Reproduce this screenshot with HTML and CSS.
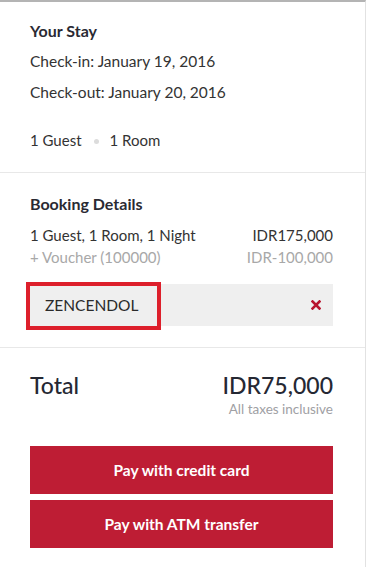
FILE: index.html
```html
<!DOCTYPE html>
<html>
<head>
<meta charset="utf-8">
<link rel="stylesheet" href="styles.css">
</head>
<body>
<div class="panel">
  <section class="stay">
    <h2 class="title">Your Stay</h2>
    <p class="line">Check-in: January 19, 2016</p>
    <p class="line">Check-out: January 20, 2016</p>
    <p class="guests">1 Guest <span class="dot"></span> 1 Room</p>
  </section>
  <section class="details">
    <h2 class="title">Booking Details</h2>
    <div class="row"><span>1 Guest, 1 Room, 1 Night</span><span>IDR175,000</span></div>
    <div class="row muted"><span>+ Voucher (100000)</span><span>IDR-100,000</span></div>
    <div class="voucher">
      <span class="code">ZENCENDOL</span>
      <svg class="remove" width="10" height="10" viewBox="0 0 10 10"><path d="M1.5 1.5L8.5 8.5M8.5 1.5L1.5 8.5" stroke="#b8142e" stroke-width="2.6" stroke-linecap="square"/></svg>
    </div>
  </section>
  <section class="summary">
    <div class="total-row"><span class="total-label">Total</span><span class="total-value">IDR75,000</span></div>
    <div class="taxes">All taxes inclusive</div>
    <button class="pay">Pay with credit card</button>
    <button class="pay">Pay with ATM transfer</button>
  </section>
</div>
</body>
</html>
```
FILE: styles.css
```css
html, body { margin: 0; padding: 0; background: #fff; }
body { font-family: Lato, "Open Sans", sans-serif; color: #2c2c34; }
.panel {
  width: 366px;
  height: 567px;
  box-sizing: border-box;
  border-top: 2px solid #b4b4b4;
  border-right: 1px solid #e2e2e2;
}
section { padding: 0 32px 0 30px; border-bottom: 1px solid #e8e8e8; }
.title { margin: 0; font-size: 16px; font-weight: 700; color: #2a2a33; line-height: 20px; }
.stay { padding-top: 19px; height: 151px; }
.line { margin: 10px 0 0; font-size: 15.5px; line-height: 20px; color: #333; }
.line + .line { margin-top: 11px; }
.guests { margin: 28px 0 0; font-size: 15px; line-height: 20px; color: #333; display: flex; align-items: center; }
.dot { width: 5px; height: 5px; border-radius: 50%; background: #dcdcdc; margin: 3px 11px 0 12px; }
.details { padding-top: 21px; height: 153px; }
.row { display: flex; justify-content: space-between; font-size: 15px; line-height: 22px; color: #333; }
.details .title { margin-bottom: 10px; }
.row.muted { color: #a8a8a8; }
.voucher {
  position: relative;
  margin-top: 16px;
  height: 42px;
  background: #efefef;
  display: flex;
  align-items: center;
  justify-content: space-between;
  padding: 0 12px 0 15px;
}
.voucher::before {
  content: "";
  position: absolute;
  left: -4px; top: -2px;
  width: 135px; height: 48px;
  box-sizing: border-box;
  border: 4px solid #dd1f2b;
}
.code { font-size: 15.5px; color: #2a2a2a; }
.summary { border-bottom: none; padding-top: 24px; }
.total-row { display: flex; justify-content: space-between; align-items: baseline; }
.total-label, .total-value { font-size: 23px; line-height: 26px; color: #252833; font-weight: 500; }
.taxes { text-align: right; font-size: 13.5px; color: #a0a0a4; margin-top: 3px; }
.pay {
  display: block;
  width: 100%;
  height: 48px;
  border: none;
  background: #be1d34;
  color: #fff;
  font-family: Lato, sans-serif;
  font-weight: 700;
  font-size: 15.5px;
  margin-top: 6px;
}
.pay:first-of-type { margin-top: 29px; }
```
